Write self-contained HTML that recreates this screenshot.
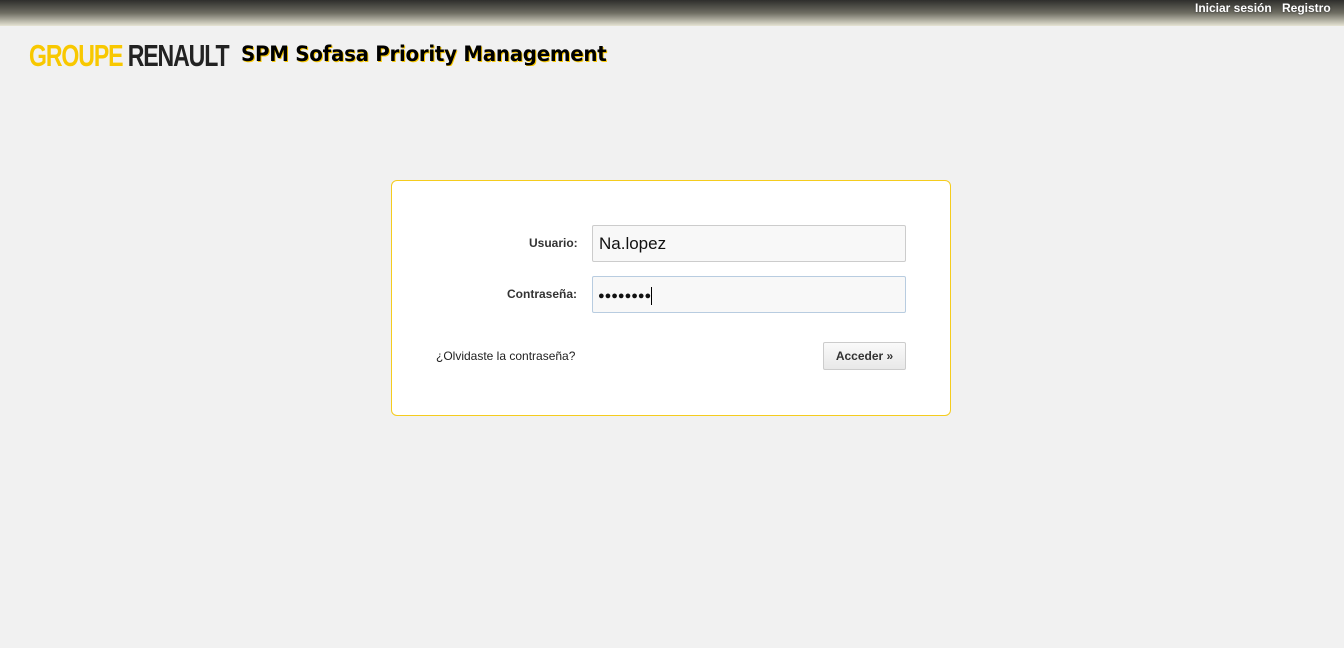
<!DOCTYPE html>
<html><head><meta charset="utf-8"><style>
body{margin:0;width:1344px;height:648px;background:#f1f1f1;font-family:"Liberation Sans",sans-serif;position:relative;overflow:hidden}
.top{position:absolute;left:0;top:0;width:1344px;height:26px;background:linear-gradient(#2e2e2c,#6e6d62 50%,#e6e4d4)}
.top span{position:absolute;top:1px;color:#fff;font-weight:bold;font-size:12px;text-shadow:0 0 2px #333}
.logo{position:absolute;left:29px;top:38px;font-weight:bold;font-size:31px;letter-spacing:-1.5px;transform:scaleX(0.745);transform-origin:left;white-space:nowrap}
.title{position:absolute;left:241px;top:42px;font-family:"DejaVu Sans",sans-serif;font-weight:bold;font-size:21px;color:#000;text-shadow:1px 1px 0 #f8c800;letter-spacing:-0.3px;transform:scaleX(0.944);transform-origin:left;white-space:nowrap}
.box{position:absolute;left:391px;top:180px;width:558px;height:234px;background:#fff;border:1px solid #f5cc1e;border-radius:6px}
.lbl{position:absolute;font-size:12px;font-weight:bold;color:#333;right:auto}
.inp{position:absolute;left:200px;width:314px;height:37px;border:1px solid #ccc;background:#f8f8f8;border-radius:2px;font-size:17px;color:#111;box-sizing:border-box;padding:8px 6px}
.btn{position:absolute;left:431px;top:161px;width:83px;height:28px;box-sizing:border-box;border:1px solid #ccc;border-radius:2px;background:linear-gradient(#fafafa,#e8e8e8);font-size:12px;font-weight:bold;color:#333;text-align:center;line-height:26px}
</style></head><body>
<div class="top"><span style="left:1195px">Iniciar sesión</span><span style="left:1282px">Registro</span></div>
<div class="logo"><span style="color:#f8c800">GROUPE</span> <span style="color:#222">RENAULT</span></div>
<div class="title">SPM Sofasa Priority Management</div>
<div class="box">
<div class="lbl" style="left:137px;top:55px">Usuario:</div>
<div class="inp" style="top:44px">Na.lopez</div>
<div class="lbl" style="left:115px;top:106px">Contraseña:</div>
<div class="inp" style="top:95px;border-color:#b8cce0;font-size:11px;padding-top:10px;padding-left:5px">●●●●●●●●<span style="display:inline-block;width:1px;height:18px;background:#000;vertical-align:middle;margin-left:0"></span></div>
<div style="position:absolute;left:44px;top:168px;font-size:12px;color:#222">¿Olvidaste la contraseña?</div>
<div class="btn">Acceder »</div>
</div>
</body></html>
